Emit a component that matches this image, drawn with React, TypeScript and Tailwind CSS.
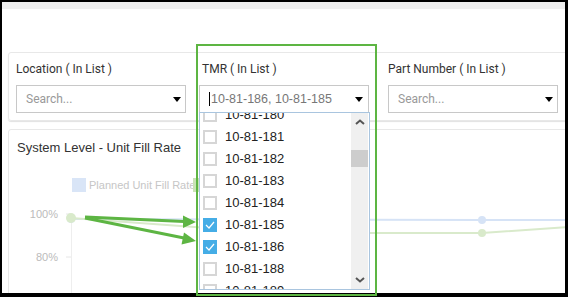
import React from "react";

const items = [
  { code: "10-81-180", checked: false },
  { code: "10-81-181", checked: false },
  { code: "10-81-182", checked: false },
  { code: "10-81-183", checked: false },
  { code: "10-81-184", checked: false },
  { code: "10-81-185", checked: true },
  { code: "10-81-186", checked: true },
  { code: "10-81-188", checked: false },
  { code: "10-81-189", checked: false },
];

function Caret() {
  return <span className="w-0 h-0 border-l-[4px] border-r-[4px] border-t-[5px] border-l-transparent border-r-transparent border-t-black" />;
}

function Checkbox({ checked }: { checked: boolean }) {
  if (checked) {
    return (
      <span className="w-[14px] h-[14px] bg-[#45ade6] flex items-center justify-center shrink-0">
        <svg width="10" height="8" viewBox="0 0 10 8">
          <polyline points="1,4 4,7 9,1" fill="none" stroke="white" strokeWidth="1.2" />
        </svg>
      </span>
    );
  }
  return <span className="w-[14px] h-[14px] border-2 border-[#d6d6d6] bg-white shrink-0" />;
}

function TmrDropdown() {
  return (
    <div className="absolute left-0 top-[27px] w-[171px] h-[178px] bg-white border border-[#a9c5df] flex z-10">
      <div className="w-[151px] overflow-hidden">
        <div className="-mt-[9px]">
          {items.map((it) => (
            <div key={it.code} className="h-[22px] flex items-center gap-[8px] pl-[3px]">
              <Checkbox checked={it.checked} />
              <span className="text-[13px] text-[#222] font-['Liberation_Sans',sans-serif]">{it.code}</span>
            </div>
          ))}
        </div>
      </div>
      <div className="w-[17px] bg-[#f0f0f0] flex flex-col">
        <div className="h-[17px] flex items-center justify-center">
          <svg width="10" height="6" viewBox="0 0 10 6">
            <polyline points="1,5 5,1.5 9,5" fill="none" stroke="#555" strokeWidth="2" />
          </svg>
        </div>
        <div className="h-[20px]" />
        <div className="h-[17px] bg-[#cdcdcd]" />
        <div className="flex-1" />
        <div className="h-[17px] flex items-center justify-center mb-[1px]">
          <svg width="10" height="6" viewBox="0 0 10 6">
            <polyline points="1,1 5,4.5 9,1" fill="none" stroke="#555" strokeWidth="2" />
          </svg>
        </div>
      </div>
    </div>
  );
}

export default function App() {
  return (
    <div className="relative w-[568px] h-[297px] bg-black pt-[2px] pl-[2px] overflow-hidden font-['Roboto',sans-serif]">
      <div className="w-[563px] h-[291px] bg-white overflow-hidden flex flex-col">
        <div className="h-[7px] bg-[#efefef] shrink-0" />

        {/* filters */}
        <div className="mt-[43px] ml-[6px] w-[600px] h-[69px] shrink-0 border border-[#e8e8e8] rounded-[3px] shadow-[0_1px_1px_rgba(0,0,0,0.12)] flex pt-[9px] pl-[7px]">
          <div className="w-[170px]">
            <div className="h-[14px] leading-[14px] text-[12px] text-[#333]">Location ( In List )</div>
            <div className="mt-[9px] h-[28px] border border-[#c8c8c8] flex items-center justify-between pl-[9px] pr-[4px]">
              <span className="text-[12px] text-[#999]">Search...</span>
              <Caret />
            </div>
          </div>
          <div className="w-[170px] ml-[13px]">
            <div className="h-[14px] leading-[14px] text-[12px] text-[#333] pl-[3px]">TMR ( In List )</div>
            <div className="relative mt-[9px]">
              <div className="h-[28px] border border-[#c8c8c8] flex items-center justify-between pl-[9px] pr-[5px]">
                <span className="flex items-center">
                  <span className="w-px h-[14px] bg-black mr-px" />
                  <span className="text-[12.5px] text-[#777] font-['Liberation_Sans',sans-serif]">10-81-186, 10-81-185</span>
                </span>
                <Caret />
              </div>
              <TmrDropdown />
            </div>
          </div>
          <div className="w-[170px] ml-[19px]">
            <div className="h-[14px] leading-[14px] text-[12px] text-[#333]">Part Number ( In List )</div>
            <div className="mt-[9px] h-[28px] border border-[#c8c8c8] flex items-center justify-between pl-[9px] pr-[4px]">
              <span className="text-[12px] text-[#999]">Search...</span>
              <Caret />
            </div>
          </div>
        </div>

        {/* chart */}
        <div className="mt-[8px] ml-[6px] w-[600px] h-[220px] shrink-0 border border-[#e8e8e8] rounded-[3px] pt-[10px]">
          <div className="pl-[8px] h-[16px] leading-[16px] text-[13px] text-[#333] font-['Liberation_Sans',sans-serif]">System Level - Unit Fill Rate</div>
          <svg width="560" height="140" className="mt-[4px] block font-['Liberation_Sans',sans-serif]">
            <rect x="63" y="18" width="14" height="14" fill="#d9e5f7" />
            <text x="80" y="29" fontSize="11" fill="#c6c6c6">Planned Unit Fill Rate</text>
            <rect x="184" y="18" width="14" height="14" fill="#c9e3b5" />
            <text x="49" y="58" fontSize="11" fill="#bbb" textAnchor="end">100%</text>
            <text x="49" y="101" fontSize="11" fill="#bbb" textAnchor="end">80%</text>
            <line x1="57" y1="54" x2="62" y2="54" stroke="#e6e6e6" />
            <line x1="57" y1="97" x2="62" y2="97" stroke="#e6e6e6" />
            <line x1="62.5" y1="54" x2="62.5" y2="140" stroke="#eeeeee" />
            <polyline points="62,59 473,60 560,60" fill="none" stroke="#d6e3f6" strokeWidth="2" />
            <circle cx="473" cy="60" r="4" fill="#d6e3f6" />
            <circle cx="62" cy="59" r="4" fill="#d6e3f6" />
            <polyline points="62,58 267,73 473,73 560,67" fill="none" stroke="#d9eacb" strokeWidth="2" />
            <circle cx="473" cy="73" r="4" fill="#d9eacb" />
            <circle cx="62" cy="58" r="5" fill="#d9eacb" />
          </svg>
        </div>
      </div>

      {/* annotations */}
      <div className="absolute left-[196px] top-[44px] w-[181px] h-[252px] border-2 border-[#5db543] pointer-events-none" />
      <svg className="absolute inset-0 pointer-events-none" width="568" height="297">
        <line x1="85" y1="217" x2="184" y2="221.5" stroke="#5db543" strokeWidth="3" />
        <polygon points="196,222 183,215.5 183,228" fill="#5db543" />
        <line x1="85" y1="218" x2="184" y2="238" stroke="#5db543" strokeWidth="3" />
        <polygon points="196,241 184,232.5 181.5,244.5" fill="#5db543" />
      </svg>
    </div>
  );
}
